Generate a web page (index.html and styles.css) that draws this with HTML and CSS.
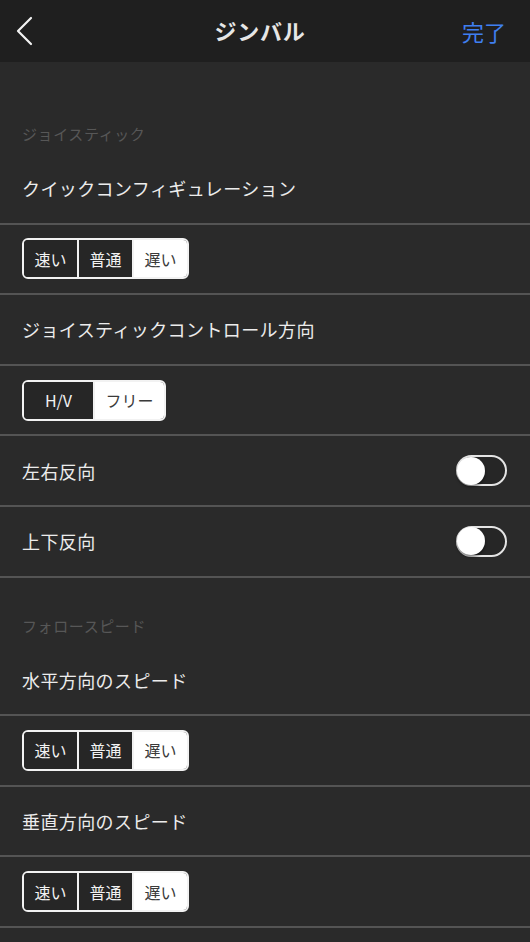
FILE: index.html
```html
<!DOCTYPE html>
<html lang="ja">
<head>
  <meta charset="UTF-8">
  <meta name="viewport" content="width=device-width, initial-scale=1.0">
  <title>ジンバル</title>
  <link rel="stylesheet" href="styles.css">
</head>
<body>
  <!-- ナビゲーションバー -->
  <header class="nav-bar">
    <button class="nav-back" aria-label="戻る">
      <svg width="20" height="30" viewBox="0 0 20 30">
        <polyline points="17,2 4,15 17,28" fill="none" stroke="#f2f2f2" stroke-width="2.2" stroke-linecap="round" stroke-linejoin="round"/>
      </svg>
    </button>
    <h1 class="nav-title">ジンバル</h1>
    <button class="nav-done">完了</button>
  </header>

  <main class="settings">
    <!-- ジョイスティック -->
    <div class="section-title first">ジョイスティック</div>
    <div class="row">クイックコンフィギュレーション</div>
    <div class="row">
      <div class="segmented">
        <span class="segment">速い</span>
        <span class="segment">普通</span>
        <span class="segment selected">遅い</span>
      </div>
    </div>
    <div class="row">ジョイスティックコントロール方向</div>
    <div class="row">
      <div class="segmented">
        <span class="segment wide">H/V</span>
        <span class="segment wide selected">フリー</span>
      </div>
    </div>
    <div class="row">
      <span>左右反向</span>
      <span class="toggle"><span class="knob"></span></span>
    </div>
    <div class="row">
      <span>上下反向</span>
      <span class="toggle"><span class="knob"></span></span>
    </div>

    <!-- フォロースピード -->
    <div class="section-title">フォロースピード</div>
    <div class="row">水平方向のスピード</div>
    <div class="row">
      <div class="segmented">
        <span class="segment">速い</span>
        <span class="segment">普通</span>
        <span class="segment selected">遅い</span>
      </div>
    </div>
    <div class="row">垂直方向のスピード</div>
    <div class="row">
      <div class="segmented">
        <span class="segment">速い</span>
        <span class="segment">普通</span>
        <span class="segment selected">遅い</span>
      </div>
    </div>
  </main>
</body>
</html>
```

FILE: styles.css
```css
/* Страница целиком */
body {
  margin: 0;
  background-color: #2a2a2a;
  font-family: "Noto Sans CJK JP", "Noto Sans", sans-serif;
  color: #ececec;
  overflow: hidden;
}

/* Верхняя панель */
.nav-bar {
  height: 62px;
  background-color: #1f1f1f;
  display: flex;
  align-items: center;
  justify-content: space-between;
  padding: 0 24px 0 14px;
}

.nav-back {
  background: none;
  border: none;
  padding: 0;
  width: 46px;
  height: 30px;
  display: flex;
  align-items: center;
}

.nav-title {
  margin: 0 0 2px;
  font-size: 22px;
  font-weight: bold;
  color: #e6e6e6;
  letter-spacing: 0.8px;
}

.nav-done {
  background: none;
  border: none;
  padding: 0;
  width: 46px;
  font-family: inherit;
  font-size: 22px;
  color: #3f7ff0;
  text-align: right;
}

/* Заголовки разделов */
.section-title {
  height: 68px;
  box-sizing: border-box;
  padding: 37px 22px 0;
  line-height: 22px;
  font-size: 15px;
  letter-spacing: 0.6px;
  color: #575757;
}

.section-title.first {
  height: 92px;
  padding-top: 61px;
}

/* Строки настроек */
.row {
  height: 70.6px;
  box-sizing: border-box;
  border-bottom: 2px solid #545454;
  padding: 0 22px;
  display: flex;
  align-items: center;
  justify-content: space-between;
  font-size: 18px;
  letter-spacing: 0.4px;
}

/* Сегментированный переключатель */
.segmented {
  display: flex;
  border: 2px solid #f2f2f2;
  border-radius: 6px;
  overflow: hidden;
}

.segment {
  width: 53px;
  height: 37px;
  display: flex;
  align-items: center;
  justify-content: center;
  font-size: 16px;
  letter-spacing: 0;
  color: #f2f2f2;
  background-color: #262626;
  border-left: 2px solid #f2f2f2;
}

.segment:first-child {
  border-left: none;
}

.segment.wide {
  width: 69px;
}

.segment.selected {
  background-color: #ffffff;
  color: #3a3a3a;
}

/* Тумблер */
.toggle {
  width: 51px;
  height: 31px;
  box-sizing: border-box;
  border: 2px solid #e4e4e4;
  border-radius: 16px;
  background-color: #262626;
  display: flex;
  align-items: center;
  margin-right: 1px;
}

.knob {
  width: 28px;
  height: 28px;
  margin-left: -1px;
  border-radius: 50%;
  background-color: #ffffff;
  box-shadow: 0 2px 3px rgba(0, 0, 0, 0.45);
}
```
